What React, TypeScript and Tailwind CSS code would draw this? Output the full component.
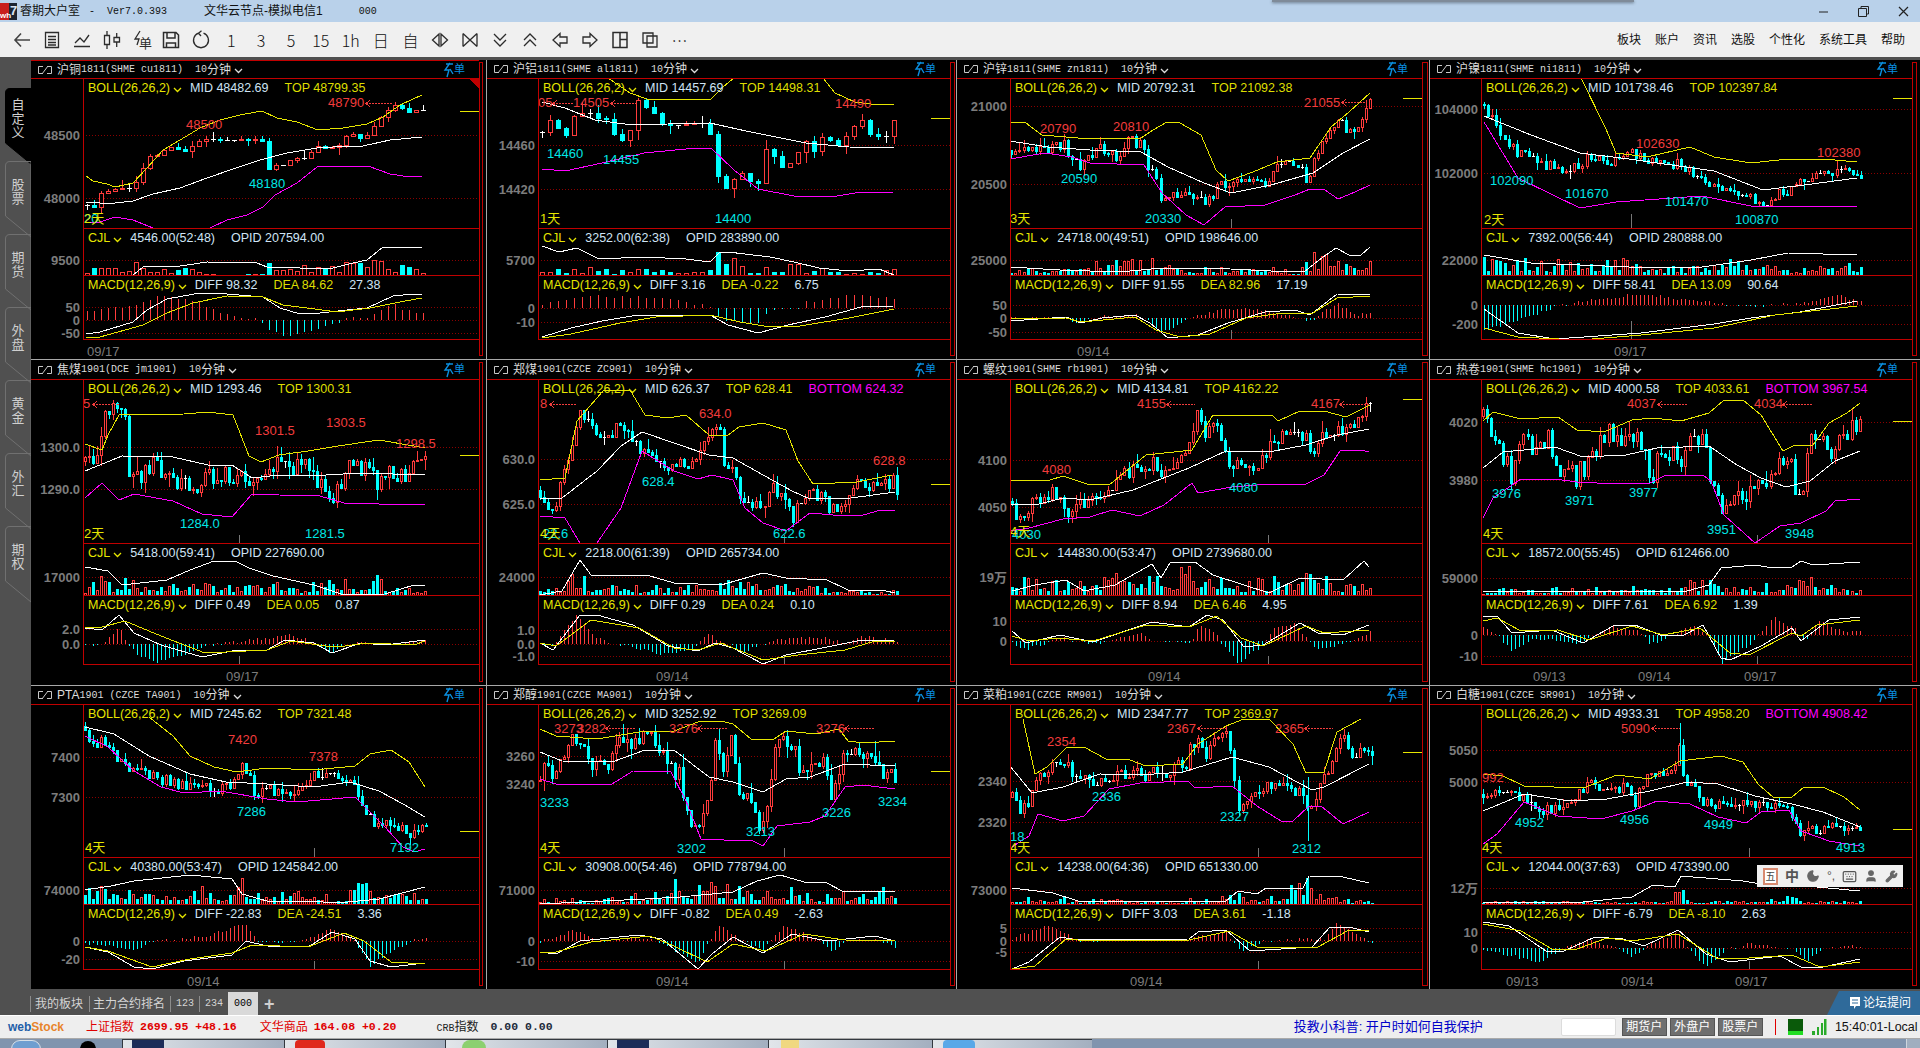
import { Keyboard, Moon, User, Wrench } from 'lucide-react'

// chart outlines below are traced off zoomed crops, z = [x0, scaleX, y0, scaleY] maps them back to page px
type Z = [number, number, number, number]
type Pt = [number, number]

type PanelCfg = {
  name: string
  code: string
  col: number
  row: number
  z: Z
  n: number
  bw: number
  jit: number
  wick: number
  trace: string
  upper: string
  mid: string
  lower: string
  volEnv: string
  volLine: string
  hist: string
  diff: string
  dea: string
  zero: number
  gridMain: [number, string][]
  gridVol: [number, string]
  gridMacd: [number, string][]
  notes: [number, number, string, string][]
  arrows: [number, number, number][]
  tick: number
  dates: [number, string][]
  verts?: [number, number, number][]
  boll: { mid: string; top: string; bottom?: string }
  cjl: string
  opid: string
  macd: [string, string, string]
  spikes?: [number, number, number][]
}

const COLS = [
  { x: 31, w: 448, plot: 83, rect: 'w-[4px] mr-[3px]' },
  { x: 487, w: 463, plot: 538, rect: 'w-[5px] mr-[1px]' },
  { x: 957, w: 465, plot: 1010, rect: 'w-[6px] mr-[1px]' },
  { x: 1430, w: 482, plot: 1481, rect: 'w-[5px] mr-[2px]' },
]

const ROWS = [
  [79, 229, 276, 340, 359],
  [380, 544, 596, 665, 685],
  [705, 858, 905, 970, 989],
]

const Z1: Z = [0, 3, 60, 3]
const Z2: Z = [487, 1.659, 60, 3]
const Z4: Z = [0, 0.8167, 0, 0.8167]
const Z5: Z = [31, 1.695, 358, 3]
const Z7: Z = [955, 1.625, 358, 3]
const Z9: Z = [31, 1.695, 684, 3]
const Z11: Z = [955, 1.625, 684, 3]

const PANELS: PanelCfg[] = [
  {
    name: '沪铜', code: '1811(SHME cu1811)', col: 0, row: 0, z: Z1, n: 49, bw: 2, jit: 0, wick: 9,
    trace: '260,435 280,445 302,400 322,392 343,388 365,385 385,385 406,370 428,325 448,288 470,285 490,272 511,260 532,267 553,275 574,258 595,243 616,238 637,238 658,240 680,240 700,240 722,238 742,240 763,236 785,238 805,328 826,316 847,318 868,302 889,295 910,297 931,278 952,258 973,263 994,262 1015,258 1036,228 1057,220 1078,236 1099,227 1120,200 1141,172 1162,152 1183,135 1204,142 1225,155 1246,150 1268,150',
    upper: '258,348 280,363 320,372 345,380 400,368 440,325 490,270 540,240 600,205 660,180 720,165 785,154 830,175 890,185 955,211 1030,205 1100,193 1150,170 1200,135 1265,105',
    mid: '258,425 300,428 345,430 400,422 460,403 540,385 620,355 700,328 780,300 860,280 950,265 1000,262 1090,257 1170,240 1265,230',
    lower: '258,490 300,485 345,472 400,480 460,505 540,530 630,505 680,480 740,465 790,440 825,405 890,370 950,322 985,319 1105,319 1170,342 1210,347 1265,350',
    volEnv: '260,625 300,610 400,612 428,570 450,600 520,618 600,630 660,642 760,640 785,632 805,560 830,620 870,600 930,595 960,628 1030,602 1120,597 1141,577 1180,610 1268,622',
    volLine: '400,645 430,620 460,618 520,622 560,615 620,607 770,610 800,620 900,625 1000,625 1060,608 1100,600 1150,562 1240,560 1265,565',
    hist: '258,752 400,738 470,708 530,715 600,730 660,755 720,772 780,779 800,805 850,830 910,822 960,800 1020,785 1040,775 1100,770 1180,735 1220,750 1268,762',
    diff: '258,822 300,815 400,785 440,750 500,718 600,700 680,703 790,710 840,745 900,763 960,760 1040,750 1100,745 1180,708 1240,703 1265,706',
    dea: '258,835 300,830 430,795 500,760 580,730 680,708 790,710 850,735 920,745 1010,755 1110,745 1200,725 1265,715',
    zero: 779,
    gridMain: [[224, '48500'], [415, '48000']],
    gridVol: [601, '9500'],
    gridMacd: [[742, '50'], [779, '0'], [818, '-50']],
    notes: [[558, 208, '48500', 'r'], [984, 142, '48790', 'r'], [746, 385, '48180', 'c'], [252, 490, '20', 'c'], [252, 490, '2天', 'y']],
    arrows: [[1098, 1180, 128]],
    tick: 154,
    dates: [[262, '09/17']],
    boll: { mid: '48482.69', top: '48799.35' },
    cjl: '4546.00(52:48)', opid: '207594.00', macd: ['98.32', '84.62', '27.38'],
  },
  {
    name: '沪铝', code: '1811(SHME al1811)', col: 1, row: 0, z: Z2, n: 45, bw: 2, jit: 0, wick: 12,
    trace: '92,215 105,180 118,205 132,225 145,165 158,160 172,160 185,175 198,178 212,225 225,240 238,208 251,115 264,140 278,160 291,195 304,195 317,195 330,192 345,190 358,190 371,225 384,355 398,388 411,355 424,338 437,365 450,370 464,258 477,290 490,322 503,308 516,275 530,240 543,275 556,230 570,240 583,255 596,228 610,195 623,178 636,225 650,228 663,228 676,178',
    upper: '200,55 238,100 265,118 372,118 392,80 420,40 550,40 578,100 610,125 650,135 675,132',
    mid: '92,125 130,145 180,180 240,195 300,192 370,190 430,213 480,232 530,250 600,260 675,265',
    lower: '92,328 130,334 190,310 260,278 330,266 372,265 410,330 450,388 510,408 580,408 610,398 675,397',
    volEnv: '92,635 112,620 180,618 220,625 280,612 330,640 385,560 410,590 430,630 465,605 520,610 580,628 676,622',
    volLine: '92,558 120,575 150,565 185,598 260,590 330,598 370,605 385,580 400,575 470,590 510,605 550,625 600,632 650,628 675,645',
    hist: '92,735 130,720 180,706 240,712 300,718 370,740 385,775 420,785 450,785 470,750 520,745 530,725 620,702 676,720',
    diff: '92,830 140,805 190,782 250,765 370,765 400,795 450,818 500,795 560,770 620,742 675,738',
    dea: '92,835 140,822 220,790 280,770 370,765 420,785 470,800 520,798 600,775 676,748',
    zero: 745,
    gridMain: [[256, '14460'], [388, '14420']],
    gridVol: [601, '5700'],
    gridMacd: [[745, '0'], [787, '-10']],
    notes: [[85, 142, '05', 'r'], [143, 142, '14505', 'r'], [578, 145, '14490', 'r'], [100, 295, '14460', 'c'], [192, 313, '14455', 'c'], [378, 490, '14400', 'c'], [88, 490, '1天', 'y']],
    arrows: [[110, 143, 128], [205, 250, 128]],
    tick: 175,
    dates: [],
    boll: { mid: '14457.69', top: '14498.31' },
    cjl: '3252.00(62:38)', opid: '283890.00', macd: ['3.16', '-0.22', '6.75'],
  },
  {
    name: '沪锌', code: '1811(SHME zn1811)', col: 2, row: 0, z: Z2, n: 90, bw: 1, jit: 10, wick: 10,
    trace: '870,270 885,275 900,260 935,265 955,250 970,290 985,315 1000,285 1020,262 1045,295 1065,240 1090,260 1095,320 1110,360 1122,430 1135,405 1160,400 1195,425 1215,375 1240,370 1270,345 1300,372 1308,310 1350,322 1360,375 1372,300 1395,210 1412,175 1430,210 1455,175 1465,115',
    upper: '868,187 895,190 920,225 980,233 1085,235 1105,210 1128,186 1150,190 1185,225 1210,330 1230,362 1270,335 1310,305 1365,295 1400,200 1430,155 1465,100',
    mid: '868,242 930,262 1000,270 1085,275 1130,320 1190,370 1235,400 1300,375 1370,340 1420,280 1465,238',
    lower: '868,297 925,280 970,290 1000,308 1090,315 1120,400 1160,465 1190,495 1225,440 1290,435 1340,405 1365,388 1390,390 1412,418 1440,395 1465,375',
    volEnv: '870,625 970,608 1090,590 1122,560 1140,625 1250,615 1305,603 1340,640 1370,575 1405,570 1420,610 1465,600',
    volLine: '868,620 950,630 1050,635 1120,625 1200,625 1300,632 1355,635 1380,600 1408,565 1430,585 1450,585 1465,562',
    hist: '870,772 960,775 985,790 1010,770 1075,765 1095,775 1120,820 1140,800 1170,775 1220,745 1280,750 1340,770 1365,785 1385,760 1410,728 1440,765 1465,762',
    diff: '868,782 960,772 985,790 1020,775 1075,765 1100,790 1130,835 1180,825 1230,790 1290,755 1340,750 1365,765 1410,703 1465,705',
    dea: '868,778 960,775 985,785 1040,778 1075,770 1110,810 1150,830 1200,822 1260,775 1320,760 1370,758 1410,715 1465,708',
    zero: 775,
    gridMain: [[137, '21000'], [373, '20500']],
    gridVol: [601, '25000'],
    gridMacd: [[735, '50'], [775, '0'], [815, '-50']],
    notes: [[918, 220, '20790', 'r'], [1038, 212, '20810', 'r'], [1356, 142, '21055', 'r'], [952, 370, '20590', 'c'], [1092, 490, '20330', 'c'], [868, 490, '3天', 'y']],
    arrows: [[1418, 1460, 127]],
    tick: 115,
    dates: [[978, '09/14']],
    verts: [[1235, 478, 505], [1235, 810, 838]],
    boll: { mid: '20792.31', top: '21092.38' },
    cjl: '24718.00(49:51)', opid: '198646.00', macd: ['91.55', '82.96', '17.19'],
  },
  {
    name: '沪镍', code: '1811(SHME ni1811)', col: 3, row: 0, z: Z4, n: 93, bw: 1, jit: 11, wick: 9,
    trace: '1212,85 1225,110 1240,125 1255,130 1275,140 1300,128 1315,135 1335,125 1350,132 1375,135 1395,150 1415,155 1440,165 1470,150 1500,140 1520,142',
    upper: '1270,50 1290,62 1312,105 1320,125 1345,128 1380,120 1400,128 1430,133 1460,130 1490,130 1517,132',
    mid: '1212,95 1250,110 1290,125 1330,130 1400,140 1440,155 1480,150 1517,145',
    lower: '1212,100 1240,145 1270,160 1290,170 1320,165 1390,160 1430,168 1470,168 1517,168',
    volEnv: '1212,208 1290,212 1330,208 1370,218 1430,208 1470,218 1517,212',
    volLine: '1212,208 1250,215 1330,218 1390,218 1430,212 1460,207 1517,208',
    hist: '1212,270 1260,255 1270,250 1300,245 1340,240 1380,245 1420,250 1430,250 1470,248 1500,241 1517,246',
    diff: '1212,252 1240,272 1270,277 1340,272 1400,265 1430,260 1470,255 1517,246',
    dea: '1212,268 1240,275 1290,278 1340,274 1400,268 1450,257 1517,250',
    zero: 249,
    gridMain: [[89, '104000'], [141, '102000']],
    gridVol: [212, '22000'],
    gridMacd: [[249, '0'], [265, '-200']],
    notes: [[1336, 121, '102630', 'r'], [1484, 128, '102380', 'r'], [1217, 151, '102090', 'c'], [1278, 162, '101670', 'c'], [1360, 168, '101470', 'c'], [1417, 183, '100870', 'c'], [1212, 183, '2天', 'y']],
    arrows: [],
    tick: 80,
    dates: [[1318, '09/17']],
    verts: [[1332, 175, 186], [1332, 262, 277]],
    boll: { mid: '101738.46', top: '102397.84' },
    cjl: '7392.00(56:44)', opid: '280888.00', macd: ['58.41', '13.09', '90.64'],
  },
  {
    name: '焦煤', code: '1901(DCE jm1901)', col: 0, row: 1, z: Z5, n: 86, bw: 1, jit: 18, wick: 16,
    trace: '92,310 115,295 125,170 150,150 160,195 165,330 185,350 205,320 230,345 265,390 290,380 300,350 340,355 375,380 395,365 420,295 450,330 470,325 490,380 505,430 530,360 545,300 560,330 590,380 610,345 640,350 668,300',
    upper: '92,258 120,275 130,230 150,170 260,168 300,163 342,170 370,295 390,313 420,290 470,280 520,265 590,245 650,265 668,270',
    mid: '92,338 155,295 240,298 300,320 340,322 375,360 420,352 500,350 560,345 668,350',
    lower: '92,420 120,376 150,425 175,408 240,430 290,468 340,478 375,408 420,412 490,415 530,435 590,437 668,438',
    volEnv: '92,700 125,618 140,680 160,610 175,650 200,690 285,650 320,680 400,680 415,650 450,690 500,645 530,635 545,680 585,640 605,685 668,690',
    volLine: '92,628 130,640 155,680 230,665 270,635 310,610 345,610 370,630 410,655 480,680 530,710 600,708 650,680 668,680',
    hist: '92,862 120,860 150,810 165,860 180,890 215,912 260,890 300,860 330,855 400,840 440,830 480,855 510,890 530,860 560,852 620,860 668,845',
    diff: '92,810 120,815 150,770 175,825 220,860 290,898 340,878 400,875 430,845 480,855 510,885 560,855 600,862 668,845',
    dea: '92,808 120,808 160,790 220,835 295,885 400,875 440,848 500,865 520,868 570,855 650,862 668,850',
    zero: 858,
    gridMain: [[268, '1300.0'], [394, '1290.0']],
    gridVol: [658, '17000'],
    gridMacd: [[812, '2.0'], [858, '0.0']],
    notes: [[88, 150, '5', 'r'], [380, 232, '1301.5', 'r'], [500, 207, '1303.5', 'r'], [618, 270, '1298.5', 'r'], [252, 510, '1284.0', 'c'], [465, 540, '1281.5', 'c'], [90, 540, '2天', 'y']],
    arrows: [[105, 150, 137]],
    tick: 292,
    dates: [[330, '09/17']],
    verts: [[352, 530, 555], [352, 893, 918]],
    boll: { mid: '1293.46', top: '1300.31' },
    cjl: '5418.00(59:41)', opid: '227690.00', macd: ['0.49', '0.05', '0.87'],
  },
  {
    name: '郑煤', code: '1901(CZCE ZC901)', col: 1, row: 1, z: Z5, n: 90, bw: 1, jit: 15, wick: 12,
    trace: '862,395 880,470 895,400 915,250 930,170 950,220 965,240 1005,195 1030,260 1060,300 1090,330 1130,310 1150,240 1165,200 1175,310 1195,360 1205,430 1235,450 1260,390 1290,480 1310,420 1340,410 1365,470 1390,400 1410,370 1440,395 1460,360 1468,395',
    upper: '862,365 905,360 925,190 970,100 1015,95 1040,170 1080,180 1110,172 1150,230 1180,235 1200,208 1240,195 1280,215 1300,310 1325,378 1400,372 1460,350',
    mid: '862,420 900,420 960,340 1000,265 1035,222 1090,255 1150,290 1190,300 1240,350 1290,400 1320,422 1390,420 1465,402',
    lower: '862,475 905,480 930,555 960,555 1000,450 1035,280 1090,340 1130,362 1155,350 1190,365 1210,450 1240,495 1280,520 1320,465 1360,470 1410,472 1440,455 1465,458',
    volEnv: '862,700 900,680 925,610 945,680 1040,680 1165,670 1195,655 1240,670 1290,670 1380,695 1465,695',
    volLine: '862,710 900,700 930,605 950,650 1010,650 1050,655 1090,675 1170,680 1240,645 1280,660 1350,665 1385,695 1450,698 1465,705',
    hist: '862,860 885,862 925,770 950,830 985,857 1040,875 1070,892 1120,870 1150,830 1175,855 1210,880 1240,860 1260,845 1340,838 1380,855 1405,835 1465,850',
    diff: '862,855 885,875 930,770 960,770 1020,800 1080,865 1130,880 1160,855 1190,870 1240,918 1280,890 1340,870 1400,850 1465,845',
    dea: '862,855 890,865 950,785 1030,810 1090,870 1130,875 1170,855 1240,905 1300,890 1380,875 1430,850 1465,850',
    zero: 857,
    gridMain: [[304, '630.0'], [439, '625.0']],
    gridVol: [658, '24000'],
    gridMacd: [[815, '1.0'], [857, '0.0'], [895, '-1.0']],
    notes: [[862, 150, '8', 'r'], [1132, 180, '634.0', 'r'], [1428, 322, '628.8', 'r'], [1035, 385, '628.4', 'c'], [1258, 540, '622.6', 'c'], [868, 540, '22.6', 'c'], [862, 540, '4天', 'y']],
    arrows: [[880, 925, 137]],
    tick: 378,
    dates: [[1060, '09/14']],
    verts: [[1277, 530, 555], [1277, 893, 918]],
    boll: { mid: '626.37', top: '628.41', bottom: '624.32' },
    cjl: '2218.00(61:39)', opid: '265734.00', macd: ['0.29', '0.24', '0.10'],
  },
  {
    name: '螺纹', code: '1901(SHME rb1901)', col: 2, row: 1, z: Z7, n: 90, bw: 1, jit: 15, wick: 12,
    trace: '92,430 105,490 130,430 160,400 185,455 215,430 240,400 270,350 320,310 330,350 375,300 392,160 405,220 430,210 440,300 470,340 505,300 510,260 545,210 570,230 580,300 600,220 640,215 675,130',
    upper: '90,365 150,370 175,355 215,378 250,380 310,290 385,275 420,172 515,172 525,188 560,160 600,158 635,178 675,140',
    mid: '90,438 130,440 175,420 220,425 290,395 380,330 440,280 510,282 570,262 620,230 672,212',
    lower: '90,520 120,510 175,482 220,478 255,455 300,475 340,440 385,375 395,404 450,388 510,378 570,378 600,350 625,280 660,275 672,283',
    volEnv: '92,660 120,650 180,660 260,640 320,650 395,610 430,640 470,670 510,650 570,635 600,630 640,680 665,625 675,680',
    volLine: '92,700 130,680 180,665 210,700 260,680 320,618 335,660 350,615 390,612 420,650 470,680 510,705 560,660 630,665 665,608 672,628',
    hist: '92,855 115,875 170,840 220,860 300,825 325,850 385,850 395,805 425,825 430,850 460,915 500,860 520,810 550,795 575,850 590,875 640,850 675,820',
    diff: '92,820 115,855 170,830 225,852 320,792 380,808 410,770 435,785 470,868 500,860 560,795 590,825 630,830 672,800',
    dea: '92,835 120,850 165,840 225,850 310,800 380,808 425,775 465,840 500,865 570,805 600,825 672,815',
    zero: 850,
    gridMain: [[307, '4100'], [448, '4050']],
    gridVol: [658, '19万'],
    gridMacd: [[790, '10'], [850, '0']],
    notes: [[296, 150, '4155', 'r'], [578, 150, '4167', 'r'], [142, 348, '4080', 'r'], [445, 402, '4080', 'c'], [92, 542, '4030', 'c'], [90, 535, '4天', 'y']],
    arrows: [[345, 390, 137], [625, 672, 137]],
    tick: 122,
    dates: [[314, '09/14']],
    verts: [[508, 530, 555], [508, 893, 918]],
    boll: { mid: '4134.81', top: '4162.22' },
    cjl: '144830.00(53:47)', opid: '2739680.00', macd: ['8.94', '6.46', '4.95'],
  },
  {
    name: '热卷', code: '1901(SHME hc1901)', col: 3, row: 1, z: Z7, n: 94, bw: 1, jit: 24, wick: 16,
    trace: '858,175 875,220 890,290 905,370 925,235 940,280 960,230 985,350 1010,360 1030,300 1065,220 1090,270 1110,215 1130,350 1150,290 1185,290 1215,210 1228,400 1250,440 1290,410 1305,380 1340,295 1355,310 1375,440 1390,220 1420,280 1450,230 1470,200',
    upper: '858,190 875,163 920,182 980,178 1010,215 1055,222 1100,185 1135,180 1180,190 1225,165 1250,125 1280,125 1310,170 1345,280 1365,262 1395,260 1420,195 1450,165 1470,135',
    mid: '858,330 890,282 975,268 1020,298 1090,290 1140,270 1225,265 1270,320 1310,360 1350,388 1390,370 1430,310 1470,280',
    lower: '858,480 875,420 920,362 975,362 1010,372 1075,378 1130,375 1155,352 1215,352 1228,370 1250,470 1300,555 1340,505 1375,495 1415,460 1430,430 1470,422',
    volEnv: '858,690 1190,680 1195,655 1230,660 1300,680 1360,665 1393,610 1400,680 1470,680',
    volLine: '858,700 1000,700 1190,700 1225,680 1245,630 1300,622 1320,628 1360,626 1375,608 1395,622 1470,612',
    hist: '858,810 880,830 905,880 940,840 1010,855 1070,805 1110,815 1130,860 1160,835 1200,800 1225,835 1245,915 1290,860 1330,778 1365,815 1380,850 1405,790 1440,820 1470,822',
    diff: '858,775 880,775 905,825 970,815 1020,855 1070,805 1105,800 1150,835 1185,832 1215,800 1245,900 1260,905 1310,865 1360,810 1375,850 1420,785 1470,778',
    dea: '858,790 880,780 920,820 980,815 1030,845 1100,805 1150,830 1210,810 1260,885 1290,890 1360,825 1375,835 1400,800 1470,785',
    zero: 830,
    gridMain: [[192, '4020'], [365, '3980']],
    gridVol: [660, '59000'],
    gridMacd: [[830, '0'], [895, '-10']],
    notes: [[1092, 150, '4037', 'r'], [1298, 150, '4034', 'r'], [872, 420, '3976', 'c'], [992, 442, '3971', 'c'], [1095, 417, '3977', 'c'], [1222, 528, '3951', 'c'], [1348, 540, '3948', 'c'], [858, 540, '4天', 'y']],
    arrows: [[1142, 1190, 137], [1345, 1392, 137]],
    tick: 190,
    dates: [[940, '09/13'], [1110, '09/14'], [1282, '09/17']],
    verts: [[1304, 530, 555], [1304, 893, 918]],
    boll: { mid: '4000.58', top: '4033.61', bottom: '3967.54' },
    cjl: '18572.00(55:45)', opid: '612466.00', macd: ['7.61', '6.92', '1.39'],
  },
  {
    name: 'PTA', code: '1901 (CZCE TA901)', col: 0, row: 2, z: Z9, n: 86, bw: 1, jit: 13, wick: 10,
    trace: '92,125 100,175 135,175 145,225 175,270 200,270 240,295 290,310 330,315 362,240 378,320 400,315 450,320 480,280 520,270 550,295 570,410 600,405 640,440 670,440',
    upper: '200,100 240,155 270,215 310,250 350,265 400,252 480,258 550,245 575,210 610,198 640,235 668,310',
    mid: '92,128 140,150 200,215 270,270 330,295 400,300 480,308 540,295 590,320 630,360 668,400',
    lower: '92,155 130,190 175,260 220,310 260,328 320,320 400,345 450,355 510,345 550,340 570,375 600,430 630,490 650,505 668,495',
    volEnv: '92,615 135,590 175,580 200,630 285,600 330,640 360,575 380,590 400,630 480,600 520,650 560,575 575,600 590,640 635,605 668,635',
    volLine: '92,618 135,605 175,590 270,573 340,585 358,630 400,650 470,650 520,658 590,645 668,610',
    hist: '92,780 130,785 175,800 210,770 240,768 300,755 360,718 385,770 430,775 470,765 510,735 545,765 575,850 600,810 650,770 672,765',
    diff: '92,790 130,805 175,850 205,855 260,830 340,812 365,770 400,785 470,788 510,745 550,765 575,830 610,850 668,838',
    dea: '92,788 130,800 205,850 270,825 340,808 375,782 470,790 530,748 565,770 610,835 668,840',
    zero: 770,
    gridMain: [[220, '7400'], [340, '7300']],
    gridVol: [617, '74000'],
    gridMacd: [[770, '0'], [826, '-20']],
    notes: [[334, 180, '7420', 'r'], [472, 230, '7378', 'r'], [350, 395, '7286', 'c'], [608, 505, '7192', 'c'], [92, 505, '4天', 'y']],
    arrows: [],
    tick: 441,
    dates: [[264, '09/14']],
    verts: [[480, 492, 520], [480, 830, 856]],
    boll: { mid: '7245.62', top: '7321.48' },
    cjl: '40380.00(53:47)', opid: '1245842.00', macd: ['-22.83', '-24.51', '3.36'],
  },
  {
    name: '郑醇', code: '1901(CZCE MA901)', col: 1, row: 2, z: Z9, n: 90, bw: 1, jit: 26, wick: 16,
    trace: '862,290 880,255 895,220 920,170 940,225 975,235 1000,190 1030,150 1065,190 1085,245 1100,290 1115,400 1130,440 1145,340 1160,175 1170,270 1185,160 1200,300 1225,400 1240,400 1260,220 1280,180 1300,230 1350,240 1360,350 1375,210 1410,235 1435,190 1445,280 1465,270',
    upper: '862,135 890,155 960,165 1030,145 1090,140 1130,115 1170,112 1190,120 1220,165 1260,165 1280,140 1330,150 1370,135 1385,170 1410,178 1465,172',
    mid: '862,205 900,230 985,235 1040,198 1090,198 1120,240 1150,280 1190,295 1240,325 1280,285 1320,280 1380,240 1465,245',
    lower: '862,285 890,300 985,300 1020,262 1085,265 1110,350 1135,465 1175,468 1220,468 1240,485 1265,425 1320,415 1345,395 1380,310 1410,303 1465,315',
    volEnv: '862,640 1000,640 1100,580 1150,590 1195,590 1250,620 1285,600 1340,650 1370,575 1390,640 1435,592 1465,620',
    volLine: '862,660 1040,645 1100,640 1190,625 1230,590 1270,573 1310,595 1350,598 1375,620 1465,620',
    hist: '862,772 920,740 960,772 1040,760 1060,770 1130,835 1150,770 1165,720 1195,760 1240,800 1275,725 1340,772 1360,805 1380,770 1430,765 1465,788',
    diff: '862,805 890,810 930,770 1030,752 1070,765 1130,855 1155,810 1190,760 1240,808 1290,750 1350,770 1430,755 1465,772',
    dea: '862,808 890,805 950,775 1050,755 1090,785 1145,835 1190,780 1245,800 1310,750 1380,768 1465,770',
    zero: 772,
    gridMain: [[215, '3260'], [301, '3240']],
    gridVol: [617, '71000'],
    gridMacd: [[772, '0'], [832, '-10']],
    notes: [[887, 147, '3273', 'r'], [925, 147, '3282', 'r'], [1082, 147, '3276', 'r'], [1330, 147, '3276', 'r'], [862, 370, '3233', 'c'], [1095, 507, '3202', 'c'], [1212, 457, '3213', 'c'], [1340, 400, '3226', 'c'], [1436, 367, '3234', 'c'], [862, 505, '4天', 'y']],
    arrows: [[975, 1025, 133], [1130, 1180, 133], [1380, 1430, 133]],
    tick: 262,
    dates: [[1060, '09/14']],
    verts: [[1277, 492, 520], [1277, 830, 856]],
    boll: { mid: '3252.92', top: '3269.09' },
    cjl: '30908.00(54:46)', opid: '778794.00', macd: ['-0.82', '0.49', '-2.63'],
  },
  {
    name: '菜粕', code: '1901(CZCE RM901)', col: 2, row: 2, z: Z11, n: 90, bw: 1, jit: 15, wick: 12,
    trace: '92,340 115,385 130,290 170,225 200,290 240,280 280,270 340,270 375,240 385,165 410,205 440,125 450,260 460,360 490,310 520,320 565,310 573,395 600,285 625,150 650,215 678,210',
    upper: '110,105 130,270 150,250 180,192 210,190 245,225 285,228 310,245 370,240 395,180 440,125 470,105 510,105 550,180 570,268 600,265 620,145 660,105',
    mid: '90,245 125,328 175,310 235,270 300,272 370,265 450,218 510,250 580,318 600,310 672,240',
    lower: '92,490 120,455 135,390 175,410 210,395 250,315 300,298 378,290 390,312 450,305 490,365 530,410 550,410 575,365 595,365 630,420 672,385',
    volEnv: '92,650 125,635 370,650 382,617 390,655 455,605 500,650 573,572 600,630 678,650',
    volLine: '92,613 160,628 200,650 440,652 460,622 490,630 505,612 565,612 575,575 630,578 672,597',
    hist: '92,765 150,722 185,750 200,770 380,765 440,745 465,805 500,770 600,765 620,718 650,750 675,775',
    diff: '92,855 120,835 170,760 200,768 380,765 395,745 440,738 480,800 580,788 610,730 640,730 672,745',
    dea: '92,855 130,845 180,765 200,768 380,768 445,740 490,790 590,790 640,738 672,742',
    zero: 770,
    gridMain: [[290, '2340'], [415, '2320']],
    gridVol: [617, '73000'],
    gridMacd: [[733, '5'], [770, '0'], [805, '-5']],
    notes: [[150, 185, '2354', 'r'], [345, 147, '2367', 'r'], [520, 147, '2365', 'r'], [222, 352, '2336', 'c'], [430, 412, '2327', 'c'], [548, 507, '2312', 'c'], [90, 470, '18', 'c'], [90, 505, '4天', 'y']],
    arrows: [[395, 440, 133], [568, 615, 133]],
    tick: 205,
    dates: [[285, '09/14']],
    verts: [[493, 492, 520], [493, 830, 856]],
    spikes: [[573, 280, 470]],
    boll: { mid: '2347.77', top: '2369.97' },
    cjl: '14238.00(64:36)', opid: '651330.00', macd: ['3.03', '3.61', '-1.18'],
  },
  {
    name: '白糖', code: '1901(CZCE SR901)', col: 3, row: 2, z: Z11, n: 95, bw: 1, jit: 10, wick: 10,
    trace: '858,330 900,330 930,340 940,380 975,375 1000,350 1030,300 1060,310 1090,310 1105,355 1125,270 1165,265 1178,190 1185,310 1205,310 1215,355 1280,360 1330,360 1355,360 1372,450 1420,430 1470,435',
    upper: '858,270 890,275 925,305 1020,312 1075,272 1130,285 1178,230 1245,215 1280,235 1305,300 1330,340 1360,340 1380,308 1410,308 1445,340 1470,378',
    mid: '858,380 925,330 1000,352 1060,345 1130,320 1190,295 1240,300 1300,335 1360,360 1410,385 1470,428',
    lower: '858,480 880,450 925,355 980,395 1050,405 1100,380 1140,350 1195,360 1240,400 1285,418 1310,385 1355,378 1375,440 1420,470 1470,485',
    volEnv: '858,650 1160,650 1178,575 1190,650 1220,640 1300,652 1365,625 1375,652 1470,650',
    volLine: '858,655 1020,655 1100,640 1135,603 1170,608 1180,575 1240,585 1280,590 1310,600 1400,608 1470,620',
    hist: '858,795 950,835 985,795 1030,765 1065,785 1100,820 1130,780 1175,745 1190,793 1220,850 1250,800 1290,780 1360,793 1385,830 1410,793 1470,785',
    diff: '858,715 900,725 960,800 990,800 1040,758 1085,765 1120,785 1175,738 1220,810 1260,835 1340,815 1375,850 1410,850 1470,825',
    dea: '858,720 920,740 970,795 1010,795 1060,762 1100,770 1175,750 1240,825 1290,822 1360,812 1405,850 1470,835',
    zero: 793,
    gridMain: [[197, '5050'], [295, '5000']],
    gridVol: [613, '12万'],
    gridMacd: [[743, '10'], [793, '0']],
    notes: [[1082, 147, '5090', 'r'], [856, 295, '992', 'r'], [910, 430, '4952', 'c'], [1080, 420, '4956', 'c'], [1217, 435, '4949', 'c'], [1432, 505, '4913', 'c'], [856, 505, '4天', 'y']],
    arrows: [[1132, 1178, 133]],
    tick: 436,
    dates: [[896, '09/13'], [1082, '09/14'], [1267, '09/17']],
    verts: [[1290, 492, 520], [1290, 830, 856]],
    spikes: [[1178, 118, 240]],
    boll: { mid: '4933.31', top: '4958.20', bottom: '4908.42' },
    cjl: '12044.00(37:63)', opid: '473390.00', macd: ['-6.79', '-8.10', '2.63'],
  },
]

const RED = '#ff3c3c'
const CYAN = '#00ffff'
const LINE_RED = '#c00000'
const NOTE: Record<string, string> = { r: '#f23c3c', c: '#00e6e6', y: '#e6e600' }

function toPts(s: string, z: Z): Pt[] {
  return s.split(' ').map((p) => {
    const [a, b] = p.split(',').map(Number)
    return [z[0] + a / z[1], z[2] + b / z[3]] as Pt
  })
}

function interp(pts: Pt[], x: number) {
  if (x <= pts[0][0]) return pts[0][1]
  for (let i = 1; i < pts.length; i++) {
    if (x <= pts[i][0]) {
      const t = (x - pts[i - 1][0]) / (pts[i][0] - pts[i - 1][0] || 1)
      return pts[i - 1][1] + (pts[i][1] - pts[i - 1][1]) * t
    }
  }
  return pts[pts.length - 1][1]
}

const poly = (pts: Pt[]) => pts.map((p) => `${Math.round(p[0])},${Math.round(p[1])}`).join(' ')

function buildBars(p: PanelCfg, seed: number) {
  let s = seed * 7919 + 13
  const r = () => {
    s = (s * 16807) % 2147483647
    return s / 2147483647
  }
  r()
  const trace = toPts(p.trace, p.z)
  const x0 = trace[0][0]
  const x1 = trace[trace.length - 1][0]
  let prev = trace[0][1]
  const bars = []
  for (let i = 0; i < p.n; i++) {
    const x = Math.round(x0 + ((x1 - x0) * i) / (p.n - 1))
    const close = interp(trace, x) + (r() - 0.5) * p.jit
    const top = Math.round(Math.min(prev, close))
    const bot = Math.round(Math.max(prev, close))
    const hi = top - Math.round(r() * r() * p.wick)
    const lo = bot + Math.round(r() * r() * p.wick)
    const kind = bot - top < 1 ? 'w' : close < prev ? 'r' : 'c'
    bars.push({ x, top, bot, hi, lo, kind, v: r(), h: r() })
    prev = close
  }
  return bars
}

function Chevron({ color = '#e6e600' }: { color?: string }) {
  return (
    <svg width="9" height="6" viewBox="0 0 9 6" className="mt-[3px] ml-[3px] shrink-0">
      <path d="M1 1 L4.5 4.5 L8 1" fill="none" stroke={color} strokeWidth="1.3" />
    </svg>
  )
}

function Legend({ left, name, items }: { left: number; name: string; items: { t: string; c: string }[] }) {
  return (
    <div className="absolute top-0 flex h-[18px] items-center whitespace-nowrap text-[12.5px] leading-[18px]" style={{ left }}>
      <span className="text-[#e6e600]">{name}</span>
      <Chevron />
      {items.map((it, i) => (
        <span key={i} className={i === 0 ? 'ml-[8px]' : 'ml-[16px]'} style={{ color: it.c }}>
          {it.t}
        </span>
      ))}
    </div>
  )
}

function AxisText({ x, y, t }: { x: number; y: number; t: string }) {
  return (
    <text x={x} y={y + 5} textAnchor="end" fontSize="13" fontWeight="700" fill="#7c7c7c">
      {t}
    </text>
  )
}

function GridLine({ x1, x2, y }: { x1: number; x2: number; y: number }) {
  return <line x1={x1} x2={x2} y1={y + 0.5} y2={y + 0.5} stroke="#8a0000" strokeDasharray="1 2" />
}

function Panel({ p, index }: { p: PanelCfg; index: number }) {
  const col = COLS[p.col]
  const tops = ROWS[p.row]
  const right = col.x + col.w
  const yz = (y: number) => Math.round(p.z[2] + y / p.z[3])
  const xz = (x: number) => Math.round(p.z[0] + x / p.z[1])
  const bars = buildBars(p, index + 3)
  const plotW = right - col.plot

  const wick: Record<string, string> = { r: '', c: '', w: '' }
  const body: Record<string, string> = { r: '', c: '', w: '' }
  bars.forEach((b) => {
    wick[b.kind] += `M${b.x + 0.5} ${b.hi}V${b.lo}`
    if (b.kind === 'w') body.w += `M${b.x - p.bw} ${b.top + 0.5}H${b.x + p.bw + 1}`
    else body[b.kind] += `M${b.x - p.bw + 0.5} ${b.top + 0.5}H${b.x + p.bw + 0.5}V${b.bot + 0.5}H${b.x - p.bw + 0.5}Z`
  })

  const volBottom = tops[2] - 1
  const volEnv = toPts(p.volEnv, p.z)
  const volR = { r: '', c: '' }
  bars.forEach((b) => {
    const env = interp(volEnv, b.x)
    const y = Math.round(volBottom - (volBottom - env) * (0.2 + 0.8 * Math.pow(b.v, 1.6)))
    const k = b.kind === 'c' ? 'c' : 'r'
    volR[k] += `M${b.x - p.bw + 0.5} ${volBottom}V${y + 0.5}H${b.x + p.bw + 0.5}V${volBottom}`
  })

  const hist = toPts(p.hist, p.z)
  const zero = yz(p.zero)
  let histR = ''
  let histC = ''
  bars.forEach((b) => {
    const y = Math.round(interp(hist, b.x) + (b.h - 0.5) * 3)
    if (y < zero) histR += `M${b.x + 0.5} ${zero}V${y}`
    else histC += `M${b.x + 0.5} ${zero}V${y}`
  })

  const view = (top: number, bottom: number) => `${col.plot} ${top} ${plotW} ${bottom - top}`
  const outer = (top: number, bottom: number) => `${col.x} ${top} ${col.w} ${bottom - top}`

  return (
    <div className={`flex bg-black ${p.row > 0 ? 'border-t border-[#a8a8a8]' : ''} ${p.col < 3 ? 'border-r border-[#a8a8a8]' : ''}`}>
      <div className="flex flex-col">
        <div className={`flex shrink-0 items-center border-b border-[#c00000] pl-[6px] pr-[14px] text-[#dcdcdc] ${p.row === 1 ? 'h-[20px]' : 'h-[19px]'} ${index === 0 ? 'border-t' : ''}`}>
          <svg width="16" height="10" viewBox="0 0 16 10" className="shrink-0">
            <path d="M6 1.5H1.5V8.5H6M10 1.5H14.5V8.5H10M5 9L11 1" fill="none" stroke="#c8c8c8" strokeWidth="1" />
          </svg>
          <span className="ml-[4px] whitespace-nowrap text-[12px]">{p.name}</span>
          <span className="font-['Liberation_Mono',monospace] whitespace-pre text-[10px]">{p.code}</span>
          <span className="ml-[12px] font-['Liberation_Mono',monospace] text-[10px]">10</span>
          <span className="text-[12px]">分钟</span>
          <Chevron color="#dcdcdc" />
          <div className="ml-auto flex items-center text-[#0a8fe0]">
            <svg width="11" height="16" viewBox="0 0 11 16">
              <path d="M7 1L2 8H6L4 15M3 2H10M7 7L10 12" fill="none" stroke="#0a8fe0" strokeWidth="1.4" />
            </svg>
            <span className="text-[11px]">单</span>
          </div>
        </div>

        {/* main pane */}
        <div className="relative">
          <svg width={col.w} height={tops[1] - tops[0]} viewBox={outer(tops[0], tops[1])} shapeRendering="crispEdges" className="block">
            {p.gridMain.map(([y, t]) => (
              <g key={t}>
                <GridLine x1={col.plot} x2={right} y={yz(y)} />
                <AxisText x={col.plot - 3} y={yz(y)} t={t} />
              </g>
            ))}
            <svg x={col.plot} y={tops[0]} width={plotW} height={tops[1] - tops[0] - 1} viewBox={view(tops[0], tops[1] - 1)}>
              {(p.verts ?? []).slice(0, 1).map(([x, a, b]) => (
                <line key={x} x1={xz(x) + 0.5} x2={xz(x) + 0.5} y1={yz(a)} y2={yz(b)} stroke="#777" />
              ))}
              <path d={wick.r} stroke={RED} fill="none" />
              <path d={wick.c} stroke={CYAN} fill="none" />
              <path d={wick.w} stroke="#fff" fill="none" />
              <path d={body.r} stroke={RED} fill="#000" />
              <path d={body.c} stroke={CYAN} fill={CYAN} />
              <path d={body.w} stroke="#fff" fill="none" />
              {(p.spikes ?? []).map(([x, a, b]) => (
                <line key={x} x1={xz(x) + 0.5} x2={xz(x) + 0.5} y1={yz(a)} y2={yz(b)} stroke={CYAN} />
              ))}
              <polyline points={poly(toPts(p.lower, p.z))} fill="none" stroke="#ff00ff" />
              <polyline points={poly(toPts(p.upper, p.z))} fill="none" stroke="#e6e600" />
              <polyline points={poly(toPts(p.mid, p.z))} fill="none" stroke="#fff" />
              {index === 0 && <path d={`M${right - 10} ${tops[0]}H${right}V${tops[0] + 10}Z`} fill={LINE_RED} />}
              <line x1={right - 19} x2={right} y1={yz(p.tick) + 0.5} y2={yz(p.tick) + 0.5} stroke="#e6e600" />
            </svg>
            {p.arrows.map(([a, b, y], i) => (
              <g key={i}>
                <line x1={xz(a)} x2={xz(b)} y1={yz(y) + 0.5} y2={yz(y) + 0.5} stroke="#f23c3c" strokeDasharray="2 1" />
                <path d={`M${xz(a) + 4} ${yz(y) - 3}L${xz(a)} ${yz(y) + 0.5}L${xz(a) + 4} ${yz(y) + 4}`} fill="none" stroke="#f23c3c" />
              </g>
            ))}
            {p.notes.map(([x, y, t, c], i) => (
              <text key={i} x={xz(x)} y={yz(y)} fontSize="13" fill={NOTE[c]}>
                {t}
              </text>
            ))}
            <line x1={col.plot + 0.5} x2={col.plot + 0.5} y1={tops[0]} y2={tops[1]} stroke={LINE_RED} />
            <line x1={col.plot} x2={right} y1={tops[1] - 0.5} y2={tops[1] - 0.5} stroke={LINE_RED} />
          </svg>
          <Legend
            left={col.plot - col.x + 5}
            name="BOLL(26,26,2)"
            items={[
              { t: `MID ${p.boll.mid}`, c: '#cfe4f5' },
              { t: `TOP ${p.boll.top}`, c: '#dede00' },
              ...(p.boll.bottom ? [{ t: `BOTTOM ${p.boll.bottom}`, c: '#ff00ff' }] : []),
            ]}
          />
        </div>

        {/* volume pane */}
        <div className="relative">
          <svg width={col.w} height={tops[2] - tops[1]} viewBox={outer(tops[1], tops[2])} shapeRendering="crispEdges" className="block">
            <GridLine x1={col.plot} x2={right} y={yz(p.gridVol[0])} />
            <AxisText x={col.plot - 3} y={yz(p.gridVol[0])} t={p.gridVol[1]} />
            <path d={volR.r} stroke={RED} fill="none" />
            <path d={volR.c} stroke={CYAN} fill={CYAN} />
            <polyline points={poly(toPts(p.volLine, p.z))} fill="none" stroke="#fff" />
            <line x1={col.plot + 0.5} x2={col.plot + 0.5} y1={tops[1]} y2={tops[2]} stroke={LINE_RED} />
            <line x1={col.plot} x2={right} y1={tops[2] - 0.5} y2={tops[2] - 0.5} stroke={LINE_RED} />
          </svg>
          <Legend
            left={col.plot - col.x + 5}
            name="CJL"
            items={[
              { t: p.cjl, c: '#cfe4f5' },
              { t: `OPID ${p.opid}`, c: '#cfe4f5' },
            ]}
          />
        </div>

        {/* macd pane */}
        <div className="relative">
          <svg width={col.w} height={tops[3] - tops[2]} viewBox={outer(tops[2], tops[3])} shapeRendering="crispEdges" className="block">
            {p.gridMacd.map(([y, t]) => (
              <g key={t}>
                <GridLine x1={col.plot} x2={right} y={yz(y)} />
                <AxisText x={col.plot - 3} y={yz(y)} t={t} />
              </g>
            ))}
            <svg x={col.plot} y={tops[2]} width={plotW} height={tops[3] - tops[2] - 1} viewBox={view(tops[2], tops[3] - 1)}>
              {(p.verts ?? []).slice(1).map(([x, a, b]) => (
                <line key={x} x1={xz(x) + 0.5} x2={xz(x) + 0.5} y1={yz(a)} y2={yz(b)} stroke="#777" />
              ))}
              <path d={histR} stroke={RED} fill="none" />
              <path d={histC} stroke={CYAN} fill="none" />
              <polyline points={poly(toPts(p.diff, p.z))} fill="none" stroke="#fff" />
              <polyline points={poly(toPts(p.dea, p.z))} fill="none" stroke="#e6e600" />
            </svg>
            <line x1={col.plot + 0.5} x2={col.plot + 0.5} y1={tops[2]} y2={tops[3]} stroke={LINE_RED} />
            <line x1={col.plot} x2={right} y1={tops[3] - 0.5} y2={tops[3] - 0.5} stroke={LINE_RED} />
          </svg>
          <Legend
            left={col.plot - col.x + 5}
            name="MACD(12,26,9)"
            items={[
              { t: `DIFF ${p.macd[0]}`, c: '#cfe4f5' },
              { t: `DEA ${p.macd[1]}`, c: '#dede00' },
              { t: p.macd[2], c: '#cfe4f5' },
            ]}
          />
        </div>

        {/* date row */}
        <div className="relative flex-1">
          {p.dates.map(([x, t]) => (
            <span key={t} className="absolute top-[2px] text-[13px] text-[#7c7c7c]" style={{ left: xz(x) - col.x }}>
              {t}
            </span>
          ))}
        </div>
      </div>
      <div className={`mt-[2px] mb-[3px] border border-[#c00000] ${col.rect}`} />
    </div>
  )
}

function SideTab({ label, active }: { label: string[]; active?: boolean }) {
  return (
    <div className="relative h-[73px] w-[26px]">
      <svg width="26" height="86" viewBox="0 0 26 86" className="absolute top-0 left-0">
        <path
          d="M0.5 5 Q0.5 0.5 5 0.5 H26 V76 L0.5 55 Z"
          fill={active ? '#000' : 'none'}
          stroke={active ? '#000' : '#707070'}
        />
      </svg>
      <div className={`absolute left-[6px] flex w-[14px] flex-col items-center text-[13px] leading-[14px] text-[#cfcfcf] ${active ? 'top-[10px]' : 'top-[17px]'}`}>
        {label.map((c) => (
          <span key={c}>{c}</span>
        ))}
      </div>
    </div>
  )
}

const TB = 'none'

function ToolIcon({ i }: { i: number }) {
  const common = { width: 20, height: 20, viewBox: '0 0 20 20', fill: TB, stroke: '#2c2c2c', strokeWidth: 1.3 }
  switch (i) {
    case 0:
      return <svg {...common}><path d="M18 10H3M9 3.5L3 10L9 16.5" stroke="#444" strokeWidth="1.6" /></svg>
    case 1:
      return <svg {...common}><path d="M3.5 2.5H16.5V17.5H3.5ZM6 6.5H14M6 9.5H14M6 12.5H14M6 15H14" /></svg>
    case 2:
      return <svg {...common}><path d="M2 16.5H18M3 13L8 8L12 12L17 5" /></svg>
    case 3:
      return <svg {...common}><path d="M2.5 5.5H7.5V14.5H2.5ZM5 1V5.5M5 14.5V19M12 7.5H17.5V12H12ZM14.7 3V7.5M14.7 12V17" /></svg>
    case 4:
      return (
        <svg {...common}>
          <path d="M8 1L3 9H7L5 15" />
          <text x="7" y="18" fontSize="13" fill="#2c2c2c" stroke="none">单</text>
        </svg>
      )
    case 5:
      return <svg {...common}><path d="M2.5 2.5H15L17.5 5V17.5H2.5ZM6 2.5V8H14V2.5M5.5 17.5V13H14.5V17.5" strokeWidth="1.5" /></svg>
    case 6:
      return <svg {...common}><path d="M12.5 3.2A7.5 7.5 0 1 1 7.5 3.2M7.5 3.2L10.5 0.8M7.5 3.2L10 6" /></svg>
    case 14:
      return <svg {...common}><path d="M9 4L2.5 10L9 16ZM11 4L17.5 10L11 16Z" /></svg>
    case 15:
      return <svg {...common}><path d="M3 3.5V16.5M17 3.5V16.5M3 3.5L17 16.5M17 3.5L3 16.5" /></svg>
    case 16:
      return <svg {...common}><path d="M4 4L10 10L16 4M4 10L10 16L16 10" /></svg>
    case 17:
      return <svg {...common}><path d="M4 10L10 4L16 10M4 16L10 10L16 16" /></svg>
    case 18:
      return <svg {...common}><path d="M10 3.5L3 10L10 16.5V13H17V7H10Z" /></svg>
    case 19:
      return <svg {...common}><path d="M10 3.5L17 10L10 16.5V13H3V7H10Z" /></svg>
    case 20:
      return <svg {...common}><path d="M3 2.5H17V17.5H3ZM10 2.5V17.5M10 9.5H17" strokeWidth="1.5" /></svg>
    case 21:
      return <svg {...common}><path d="M3 3H13V6H17V17H7V13H3ZM7 6H13V13H7Z" /></svg>
    default:
      return null
  }
}

const TOOLS: (number | string)[] = [0, 1, 2, 3, 4, 5, 6, '1', '3', '5', '15', '1h', '日', '自', 14, 15, 16, 17, 18, 19, 20, 21, '…']

function Toolbar() {
  return (
    <div className="flex h-[35px] items-center bg-[#f0f0f0] pl-[7px]">
      {TOOLS.map((t, i) => (
        <div key={i} className="flex h-[30px] w-[29.9px] items-center justify-center">
          {typeof t === 'number' ? (
            <ToolIcon i={t} />
          ) : (
            <span className="font-['Noto_Sans_CJK_SC',sans-serif] text-[16px] font-light text-[#111]">{t}</span>
          )}
        </div>
      ))}
      <div className="ml-auto flex gap-[14px] pr-[15px] text-[12px] text-[#111]">
        {['板块', '账户', '资讯', '选股', '个性化', '系统工具', '帮助'].map((m) => (
          <span key={m}>{m}</span>
        ))}
      </div>
    </div>
  )
}

function TitleBar() {
  return (
    <div className="relative flex h-[22px] items-center bg-[#b9d1ea] text-[12px] text-[#111]">
      <svg width="17" height="17" viewBox="0 0 17 17" className="ml-0 shrink-0">
        <rect width="17" height="17" fill="#c81e1e" />
        <rect x="9" width="8" height="17" fill="#1c2430" />
        <text x="0" y="15" fontSize="8" fontWeight="700" fill="#fff">wh</text>
        <text x="10" y="12" fontSize="13" fontWeight="700" fill="#d8e4f4">7</text>
      </svg>
      <span className="ml-[3px]">睿期大户室</span>
      <span className="ml-[9px] font-['Liberation_Mono',monospace] whitespace-pre text-[10px]">-  Ver7.0.393</span>
      <span className="ml-[37px]">文华云节点-模拟电信1</span>
      <span className="ml-[36px] font-['Liberation_Mono',monospace] text-[10px]">000</span>
      <div className="absolute top-0 left-[1272px] h-[2px] w-[362px] bg-[#7f8b99] shadow-[0_1px_3px_rgba(40,50,60,0.6)]" />
      <div className="ml-auto flex items-center gap-[29px] pr-[11px]">
        <svg width="11" height="11" viewBox="0 0 11 11"><path d="M1 6H10" stroke="#222" /></svg>
        <svg width="11" height="11" viewBox="0 0 11 11" fill="none" stroke="#222"><path d="M3 2.5V0.5H10.5V8H8.5M0.5 2.5H8.5V10.5H0.5Z" /></svg>
        <svg width="11" height="11" viewBox="0 0 11 11"><path d="M1 1L10 10M10 1L1 10" stroke="#222" strokeWidth="1.2" /></svg>
      </div>
    </div>
  )
}

function TabsBar() {
  const Sep = () => <span className="mx-[3px] h-[16px] w-px bg-[#8c8c8c]" />
  return (
    <div className="relative flex h-[26px] items-end bg-[#505050] pl-[27px] text-[12px] text-[#d4d4d4]">
      <div className="flex h-[23px] items-center">
        <Sep />
        <span className="ml-[1px] mr-[3px]">我的板块</span>
        <Sep />
        <span className="mr-[2px]">主力合约排名</span>
        <Sep />
        <span className="mx-[2px] font-['Liberation_Mono',monospace] text-[10px]">123</span>
        <Sep />
        <span className="mx-[2px] font-['Liberation_Mono',monospace] text-[10px]">234</span>
        <span className="ml-[3px] flex h-[23px] w-[30px] shrink-0 items-center justify-center bg-[#d9d9d9] font-['Liberation_Mono',monospace] text-[10px] text-black">000</span>
        <span className="ml-[6px] text-[18px] leading-none font-bold text-[#cfcfcf]">+</span>
      </div>
      <div className="ml-auto flex h-[24px] w-[93px] items-center gap-[3px] bg-[#2f6a9a] pl-[23px] text-[12px] text-white [clip-path:polygon(12px_0,100%_0,100%_100%,0_100%)]">
        <svg width="10" height="12" viewBox="0 0 10 12"><path d="M0 0H10V9H6L4 12V9H0Z" fill="#fff" /><path d="M2 3H8M2 6H8" stroke="#2f6a9a" /></svg>
        <span>论坛提问</span>
      </div>
    </div>
  )
}

function StatusBar() {
  const num = "shrink-0 font-['Liberation_Mono',monospace] font-bold text-[11.5px]"
  const cjk = 'shrink-0 whitespace-nowrap'
  return (
    <div className="flex h-[23px] items-center border-t border-white bg-[#eeeeee] text-[12px]">
      <span className="ml-[8px] w-[60px] shrink-0 text-[12px] font-bold whitespace-nowrap">
        <span className="text-[#1f5fa8]">web</span>
        <span className="text-[#e8842a]">Stock</span>
      </span>
      <span className={`ml-[18px] text-[#e00000] ${cjk}`}>上证指数</span>
      <span className={`ml-[6px] whitespace-pre text-[#e00000] ${num}`}>2699.95 +48.16</span>
      <span className={`ml-[23px] text-[#e00000] ${cjk}`}>文华商品</span>
      <span className={`ml-[6px] whitespace-pre text-[#e00000] ${num}`}>164.08 +0.20</span>
      <span className={`ml-[40px] text-[#222] ${cjk}`}><span className="font-['Liberation_Mono',monospace] text-[10px]">CRB</span>指数</span>
      <span className={`ml-[12px] whitespace-pre text-[#1c2a3a] ${num}`}>0.00 0.00</span>
      <span className={`ml-[741px] text-[13px] text-[#0000c8] ${cjk}`}>投教小科普: 开户时如何自我保护</span>
      <div className="ml-[78px] h-[18px] w-[55px] shrink-0 rounded-[2px] border border-[#dcdcdc] bg-white" />
      <div className="ml-[6px] flex shrink-0 gap-[3px]">
        {['期货户', '外盘户', '股票户'].map((b) => (
          <span key={b} className="flex h-[18px] w-[45px] items-center justify-center border border-[#555] bg-[#6f6f6f] text-white">
            {b}
          </span>
        ))}
      </div>
      <span className="ml-[12px] h-[16px] w-px shrink-0 bg-[#e00000]" />
      <div className="ml-[12px] h-[16px] w-[15px] shrink-0 bg-[#0a5a0a] [box-shadow:inset_0_-4px_0_#22dd22]" />
      <svg width="16" height="16" viewBox="0 0 16 16" className="ml-[8px] shrink-0">
        <path d="M1 16V12H4V16ZM6 16V8H8V16ZM10 16V4H12V16ZM13 16V0H15.5V16Z" fill="#2aaa2a" />
      </svg>
      <span className={`ml-[8px] text-[12.5px] text-[#111] ${cjk}`}>15:40:01-Local</span>
    </div>
  )
}

function TaskBar() {
  const btn = 'h-full border-t border-l border-[#33383f] bg-linear-to-r from-[#e2e6ea] to-[#a3afbf]'
  return (
    <div className="flex h-[10px] border-t border-[#a9a9a9] bg-[#8094ae]">
      <div className="relative w-[122px]">
        <div className="absolute top-[1px] left-[11px] h-[18px] w-[30px] rounded-full border border-[#d8e0e8] bg-[#6f9ed0]" />
        <div className="absolute top-[2px] left-[80px] h-[16px] w-[16px] rounded-full bg-black" />
      </div>
      <div className={`${btn} relative w-[162px]`}><div className="absolute left-[9px] h-full w-[32px] bg-[#1c2c58]" /></div>
      <div className={`${btn} relative w-[161px]`}><div className="absolute left-[10px] h-full w-[30px] rounded-t-[4px] bg-[#e0281c]" /></div>
      <div className={`${btn} relative w-[162px]`}><div className="absolute left-[16px] h-full w-[24px] rounded-t-full bg-[#8cd070]" /></div>
      <div className={`${btn} relative w-[161px]`}><div className="absolute left-[9px] h-full w-[32px] bg-[#1c2c58]" /></div>
      <div className={`${btn} relative w-[164px]`}><div className="absolute left-[12px] h-full w-[18px] bg-[#f0d880]" /></div>
      <div className={`${btn} relative w-[160px]`}><div className="absolute left-[10px] h-full w-[32px] rounded-t-[4px] bg-[#58a8e8]" /></div>
      <div className="ml-auto h-full w-[14px] border-l border-[#cfd6de] bg-[#a0aebf]" />
    </div>
  )
}

export default function App() {
  return (
    <div className="relative flex h-[1048px] w-[1920px] flex-col overflow-hidden bg-[#505050] font-['Liberation_Sans','Noto_Sans_CJK_SC',sans-serif]">
      <TitleBar />
      <Toolbar />
      <div className="flex h-[932px]">
        <div className="flex w-[31px] flex-col pt-[31px] pl-[5px]">
          <SideTab label={['自', '定', '义']} active />
          <SideTab label={['股', '票']} />
          <SideTab label={['期', '货']} />
          <SideTab label={['外', '盘']} />
          <SideTab label={['黄', '金']} />
          <SideTab label={['外', '汇']} />
          <SideTab label={['期', '权']} />
        </div>
        <div className="mt-[3px] grid h-[929px] grid-cols-[456px_470px_473px_490px] grid-rows-[299px_326px_304px]">
          {PANELS.map((p, i) => (
            <Panel key={p.name} p={p} index={i} />
          ))}
        </div>
      </div>
      <TabsBar />
      <StatusBar />
      <TaskBar />

      {/* floating IME toolbar */}
      <div className="absolute top-[865px] left-[1757px] flex h-[22px] w-[146px] items-center gap-[7px] bg-[#f0f0f0] pl-[6px] text-[#666]">
        <span className="flex h-[17px] w-[15px] items-center justify-center border-2 border-[#d98a70] bg-white text-[10px] text-[#444]">五</span>
        <span className="text-[14px] font-bold leading-none text-[#555]">中</span>
        <Moon size={14} fill="#666" stroke="#666" />
        <span className="text-[12px] leading-none text-[#555]">°,</span>
        <Keyboard size={15} stroke="#555" />
        <User size={14} fill="#666" stroke="#666" />
        <Wrench size={13} fill="#666" stroke="#666" />
      </div>
    </div>
  )
}
